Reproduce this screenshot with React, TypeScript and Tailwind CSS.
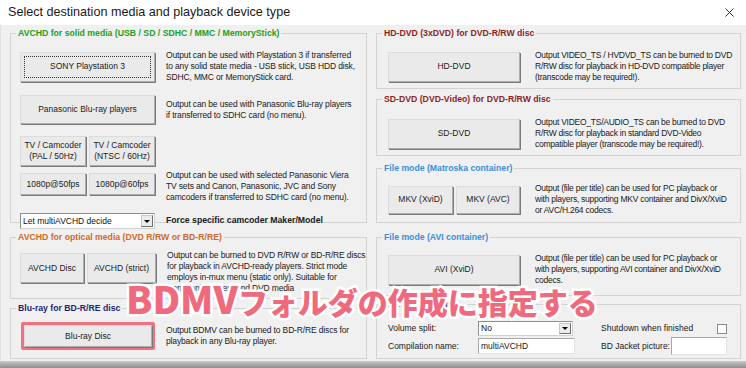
import type { ReactNode } from "react";

interface BtnProps {
  children: ReactNode;
  className: string;
  focus?: boolean;
}

function Btn({ children, className, focus }: BtnProps) {
  return (
    <div
      className={`relative flex shrink-0 items-center justify-center whitespace-nowrap text-center leading-[11px] bg-[#eaeaea] border border-[#adadad] border-t-[#dcdcdc] border-l-[#dcdcdc] shadow-[1px_1px_0_#7a7a7a] text-[#1b1b1b] ${className}`}
    >
      {focus && <div className="absolute inset-[3px] border border-dotted border-[#333]" />}
      <span>{children}</span>
    </div>
  );
}

interface GroupProps {
  label: string;
  color: string;
  className: string;
  children?: ReactNode;
}

function Group({ label, color, className, children }: GroupProps) {
  return (
    <div className={`relative shrink-0 border border-[#d3d3d3] ${className}`}>
      <div className={`absolute -top-[6px] left-[5px] whitespace-nowrap bg-[#f0f0f0] px-[2px] text-[8.7px] font-bold leading-[11px] ${color}`}>
        {label}
      </div>
      {children}
    </div>
  );
}

function Desc({ children, className = "" }: { children: ReactNode; className?: string }) {
  return <div className={`whitespace-nowrap leading-[11px] tracking-[-0.15px] text-[#202020] ${className}`}>{children}</div>;
}

function Combo({ value, className }: { value: string; className: string }) {
  return (
    <div className={`flex shrink-0 items-center bg-white border border-[#8e8e8e] border-b-[#d0d0d0] border-r-[#d0d0d0] ${className}`}>
      <span className="flex-1 whitespace-nowrap pl-[2px] leading-[11px] text-[#111]">{value}</span>
      <div className="m-[1px] flex h-[calc(100%-2px)] w-[12px] items-center justify-center bg-[#ececec] border border-[#c8c8c8] border-b-[#6f6f6f] border-r-[#6f6f6f]">
        <div className="h-0 w-0 border-x-[3px] border-t-[3px] border-x-transparent border-t-black" />
      </div>
    </div>
  );
}

export default function App() {
  return (
    <div className="relative flex h-[368px] w-[746px] flex-col overflow-hidden bg-[#f0f0f0] font-['Liberation_Sans',Arial,sans-serif] text-[8.5px]">
      <div className="flex h-[25px] shrink-0 items-center justify-between bg-white pl-[8px] pr-[12px]">
        <span className="text-[12.6px] text-[#1a1a1a]">Select destination media and playback device type</span>
        <svg width="9" height="9" viewBox="0 0 9 9" className="text-[#333]">
          <path d="M0.5 0.5 L8.5 8.5 M8.5 0.5 L0.5 8.5" stroke="currentColor" strokeWidth="1" />
        </svg>
      </div>

      <div className="flex flex-1 border-l border-[#e2e2e2] pl-[9px] pt-[8px]">
        {/* left column */}
        <div className="flex w-[357px] flex-col">
          <Group label="AVCHD for solid media (USB / SD / SDHC / MMC / MemoryStick)" color="text-[#22a022]" className="h-[190px] pl-[9px] pt-[16px]">
            <div className="flex items-center">
              <Btn className="h-[30px] w-[135px]" focus>SONY Playstation 3</Btn>
              <Desc className="ml-[11px]">
                Output can be used with Playstation 3 if transferred
                <br />
                to any solid state media - USB stick, USB HDD disk,
                <br />
                SDHC, MMC or MemoryStick card.
              </Desc>
            </div>
            <div className="mt-[12px] flex items-center">
              <Btn className="h-[29px] w-[135px]">Panasonic Blu-ray players</Btn>
              <Desc className="ml-[11px]">
                Output can be used with Panasonic Blu-ray players
                <br />
                if transferred to SDHC card (no menu).
              </Desc>
            </div>
            <div className="mt-[12px] flex items-start">
              <div className="grid w-[135px] shrink-0 grid-cols-2 gap-x-[3px] gap-y-[7px]">
                <Btn className="h-[30px]">
                  TV / Camcoder
                  <br />
                  (PAL / 50Hz)
                </Btn>
                <Btn className="h-[30px]">
                  TV / Camcoder
                  <br />
                  (NTSC / 60Hz)
                </Btn>
                <Btn className="h-[22px]">1080p@50fps</Btn>
                <Btn className="h-[22px]">1080p@60fps</Btn>
              </div>
              <Desc className="ml-[11px] mt-[34px]">
                Output can be used with selected Panasonic Viera
                <br />
                TV sets and Canon, Panasonic, JVC and Sony
                <br />
                camcoders if transferred to SDHC card (no menu).
              </Desc>
            </div>
            <div className="mt-[10px] flex items-center">
              <Combo value="Let multiAVCHD decide" className="h-[16px] w-[135px]" />
              <span className="ml-[11px] whitespace-nowrap text-[8.7px] font-bold text-[#1a1a1a]">Force specific camcoder Maker/Model</span>
            </div>
          </Group>

          <Group label="AVCHD for optical media (DVD R/RW or BD-R/RE)" color="text-[#d06a2c]" className="mt-[14px] h-[62px] pl-[9px] pt-[15px]">
            <div className="flex items-start">
              <div className="flex shrink-0 gap-[3px]">
                <Btn className="h-[30px] w-[64px]">AVCHD Disc</Btn>
                <Btn className="h-[30px] w-[69px]">AVCHD (strict)</Btn>
              </div>
              <Desc className="ml-[11px] -mt-[3px]">
                Output can be burned to DVD R/RW or BD-R/RE discs
                <br />
                for playback in AVCHD-ready players. Strict mode
                <br />
                employs in-mux menu (static only). Suitable for
                <br />
                Panasonic players and DVD media
              </Desc>
            </div>
          </Group>

          <Group label="Blu-ray for BD-R/RE disc" color="text-[#1f1f7a]" className="mt-[9px] h-[51px] pl-[10px] pt-[13px]">
            <div className="flex items-center">
              <div className="flex h-[28px] w-[134px] shrink-0 rounded-[2px] border-[3px] border-[#f0717f]">
                <Btn className="h-full w-full">Blu-ray Disc</Btn>
              </div>
              <Desc className="ml-[11px]">
                Output BDMV can be burned to BD-R/RE discs for
                <br />
                playback in any Blu-ray player.
              </Desc>
            </div>
          </Group>
        </div>

        {/* right column */}
        <div className="ml-[9px] flex w-[365px] flex-col">
          <Group label="HD-DVD (3xDVD) for DVD-R/RW disc" color="text-[#8e1f1f]" className="h-[56px] pl-[11px] pt-[16px]">
            <div className="flex items-center">
              <Btn className="h-[30px] w-[132px]">HD-DVD</Btn>
              <Desc className="ml-[15px] tracking-[-0.25px]">
                Output VIDEO_TS / HVDVD_TS can be burned to DVD
                <br />
                R/RW disc for playback in HD-DVD compatible player
                <br />
                (transcode may be required!).
              </Desc>
            </div>
          </Group>

          <Group label="SD-DVD (DVD-Video) for DVD-R/RW disc" color="text-[#8e1f1f]" className="mt-[10px] h-[57px] pl-[11px] pt-[17px]">
            <div className="flex items-center">
              <Btn className="h-[30px] w-[132px]">SD-DVD</Btn>
              <Desc className="ml-[15px] tracking-[-0.25px]">
                Output VIDEO_TS/AUDIO_TS can be burned to DVD
                <br />
                R/RW disc for playback in standard DVD-Video
                <br />
                compatible player (transcode may be required!).
              </Desc>
            </div>
          </Group>

          <Group label="File mode (Matroska container)" color="text-[#3b8fd8]" className="mt-[12px] h-[55px] pl-[11px] pt-[14px]">
            <div className="flex items-center">
              <div className="flex shrink-0 gap-[3px]">
                <Btn className="h-[28px] w-[65px]">MKV (XviD)</Btn>
                <Btn className="h-[28px] w-[64px]">MKV (AVC)</Btn>
              </div>
              <Desc className="ml-[15px] tracking-[-0.25px]">
                Output (file per title) can be used for PC playback or
                <br />
                with players, supporting MKV container and DivX/XviD
                <br />
                or AVC/H.264 codecs.
              </Desc>
            </div>
          </Group>

          <Group label="File mode (AVI container)" color="text-[#3b8fd8]" className="mt-[14px] h-[59px] pl-[11px] pt-[15px]">
            <div className="flex items-center">
              <Btn className="h-[30px] w-[132px]">AVI (XviD)</Btn>
              <Desc className="ml-[15px] tracking-[-0.25px]">
                Output (file per title) can be used for PC playback or
                <br />
                with players, supporting AVI container and DivX/XviD
                <br />
                codecs.
              </Desc>
            </div>
          </Group>

          <Group label="General settings" color="text-[#1a1a1a]" className="mt-[8px] h-[55px] pl-[11px] pt-[16px]">
            <div className="flex items-center whitespace-nowrap text-[#1a1a1a]">
              <span className="w-[90px] shrink-0">Volume split:</span>
              <Combo value="No" className="h-[15px] w-[95px]" />
              <span className="ml-[28px] w-[116px] shrink-0">Shutdown when finished</span>
              <div className="h-[10px] w-[10px] shrink-0 border border-[#8a8a8a] bg-white" />
            </div>
            <div className="mt-[1px] flex items-center whitespace-nowrap text-[#1a1a1a]">
              <span className="w-[90px] shrink-0">Compilation name:</span>
              <div className="flex h-[16px] w-[97px] shrink-0 items-center border border-[#a8a8a8] border-b-[#e2e2e2] border-r-[#e2e2e2] bg-white pl-[2px] leading-[11px]">
                multiAVCHD
              </div>
              <span className="ml-[26px] w-[70px] shrink-0">BD Jacket picture:</span>
              <div className="h-[18px] w-[56px] shrink-0 border border-[#a8a8a8] border-b-[#e2e2e2] border-r-[#e2e2e2] bg-white" />
            </div>
          </Group>
        </div>
      </div>

      <div className="h-[7px] shrink-0 bg-gradient-to-b from-[#c9c9c9] to-[#8e8e8e]" />

      {/* annotation overlay */}
      <div className="absolute left-[126px] top-[279px] flex items-baseline whitespace-nowrap font-['Noto_Sans_CJK_JP',sans-serif] font-black leading-none text-[#f06a7e] [-webkit-text-stroke:5px_white] [paint-order:stroke_fill]">
        <span className="text-[38px]">BDMV</span>
        <span className="text-[30px]">フォルダの作成に指定する</span>
      </div>
    </div>
  );
}
